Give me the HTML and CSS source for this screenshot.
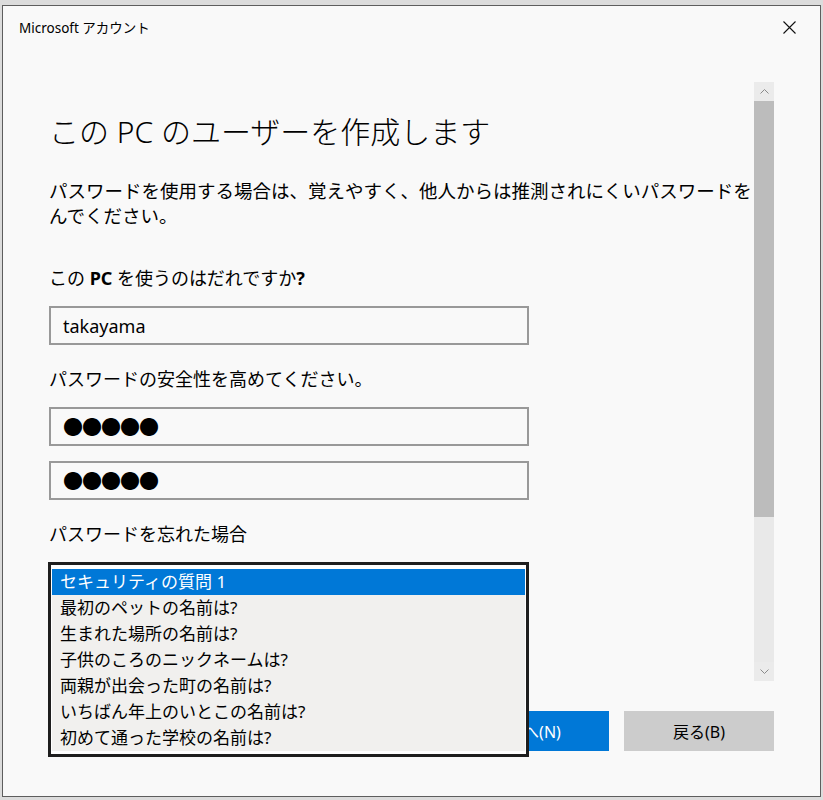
FILE: index.html
```html
<!DOCTYPE html>
<html lang="ja">
<head>
  <meta charset="UTF-8">
  <title>Microsoft アカウント</title>
  <link rel="stylesheet" href="styles.css">
</head>
<body>

<div class="dialog">
  <div class="titlebar">
    <span class="title">Microsoft アカウント</span>
    <svg class="close" width="13" height="13" viewBox="0 0 13 13">
      <path d="M0.5 0.5L12.5 12.5M12.5 0.5L0.5 12.5" stroke="#111" stroke-width="1.1" fill="none"/>
    </svg>
  </div>

  <div class="main">
    <div class="content">
      <h1>この PC のユーザーを作成します</h1>
      <p class="lead">パスワードを使用する場合は、覚えやすく、他人からは推測されにくいパスワードをんでください。</p>

      <label class="field-label">この <b>PC</b> を使うのはだれですか<b>?</b></label>
      <div class="textbox">takayama</div>

      <label class="field-label">パスワードの安全性を高めてください。</label>
      <div class="textbox dots">●●●●●</div>
      <div class="textbox dots">●●●●●</div>

      <label class="field-label">パスワードを忘れた場合</label>
      <!-- 開いた状態のセキュリティの質問 -->
      <div class="combo">
        <ul class="dropdown">
          <li class="selected">セキュリティの質問 1</li>
          <li>最初のペットの名前は?</li>
          <li>生まれた場所の名前は?</li>
          <li>子供のころのニックネームは?</li>
          <li>両親が出会った町の名前は?</li>
          <li>いちばん年上のいとこの名前は?</li>
          <li>初めて通った学校の名前は?</li>
        </ul>
      </div>
    </div>

    <div class="scrollbar">
      <div class="arrow">
        <svg width="9" height="5" viewBox="0 0 9 5"><path d="M0.5 4.5L4.5 0.5L8.5 4.5" stroke="#8a8a8a" fill="none"/></svg>
      </div>
      <div class="thumb"></div>
      <div class="track"></div>
      <div class="arrow">
        <svg width="9" height="5" viewBox="0 0 9 5"><path d="M0.5 0.5L4.5 4.5L8.5 0.5" stroke="#8a8a8a" fill="none"/></svg>
      </div>
    </div>
  </div>

  <div class="footer">
    <button class="btn primary">次へ(N)</button>
    <button class="btn">戻る(B)</button>
  </div>
</div>

</body>
</html>
```

FILE: styles.css
```css
body {
  margin: 0;
  background-color: #dcdcdc;
  font-family: "Noto Sans", "Noto Sans CJK JP", sans-serif;
  color: #000;
}

.dialog {
  margin: 5px 2px 0;
  width: 817px;
  height: 790px;
  border: 1px solid #5e5e5e;
  background-color: #f9f9f9;
  display: flex;
  flex-direction: column;
}

.titlebar {
  height: 42px;
  display: flex;
  align-items: center;
  justify-content: space-between;
  padding: 0 24px 0 16px;
}

.title {
  font-size: 13.5px;
}

.main {
  display: flex;
  height: 599px;
  margin-top: 34px;
  padding-right: 46px;
}

.content {
  flex: 1;
  padding-left: 46px;
}

h1 {
  margin: 30px 0 0;
  font-size: 30px;
  font-weight: 300;
  line-height: 40px;
}

.lead {
  margin: 26px 0 38px;
  font-size: 18.5px;
  line-height: 25px;
}

.field-label {
  display: block;
  margin: 22px 0 16px;
  font-size: 18px;
  line-height: 24px;
}

.textbox {
  box-sizing: border-box;
  width: 480px;
  height: 39px;
  border: 2px solid #999;
  padding-left: 12px;
  display: flex;
  align-items: center;
  font-size: 18px;
}

.textbox + .textbox {
  margin-top: 15px;
}

.dots {
  font-family: "Noto Sans CJK JP", sans-serif;
  font-size: 20px;
  letter-spacing: -1px;
}

.combo {
  position: relative;
  width: 480px;
  height: 40px;
}

.dropdown {
  position: absolute;
  top: 0;
  left: -1px;
  z-index: 10;
  width: 481px;
  box-sizing: border-box;
  margin: 0;
  padding: 4px 1px 3px;
  list-style: none;
  border: 3px solid #1e1e1e;
  background-color: #fff;
}

.dropdown li {
  height: 26px;
  line-height: 26px;
  padding-left: 8px;
  font-size: 17px;
  background-color: #f1f0ee;
}

.dropdown li.selected {
  background-color: #0078d7;
  color: #fff;
}

.scrollbar {
  width: 20px;
  display: flex;
  flex-direction: column;
  background-color: #e9e9e9;
}

.arrow {
  height: 19px;
  display: flex;
  align-items: center;
  justify-content: center;
  background-color: #ebebeb;
}

.thumb {
  height: 416px;
  background-color: #bcbcbc;
}

.track {
  flex: 1;
}

.footer {
  display: flex;
  justify-content: flex-end;
  gap: 15px;
  margin-top: 30px;
  padding-right: 46px;
}

.btn {
  width: 150px;
  height: 40px;
  border: none;
  font-family: "Noto Sans", "Noto Sans CJK JP", sans-serif;
  font-size: 16px;
  background-color: #cccccc;
  color: #000;
}

.btn.primary {
  background-color: #0078d7;
  color: #fff;
}
```
